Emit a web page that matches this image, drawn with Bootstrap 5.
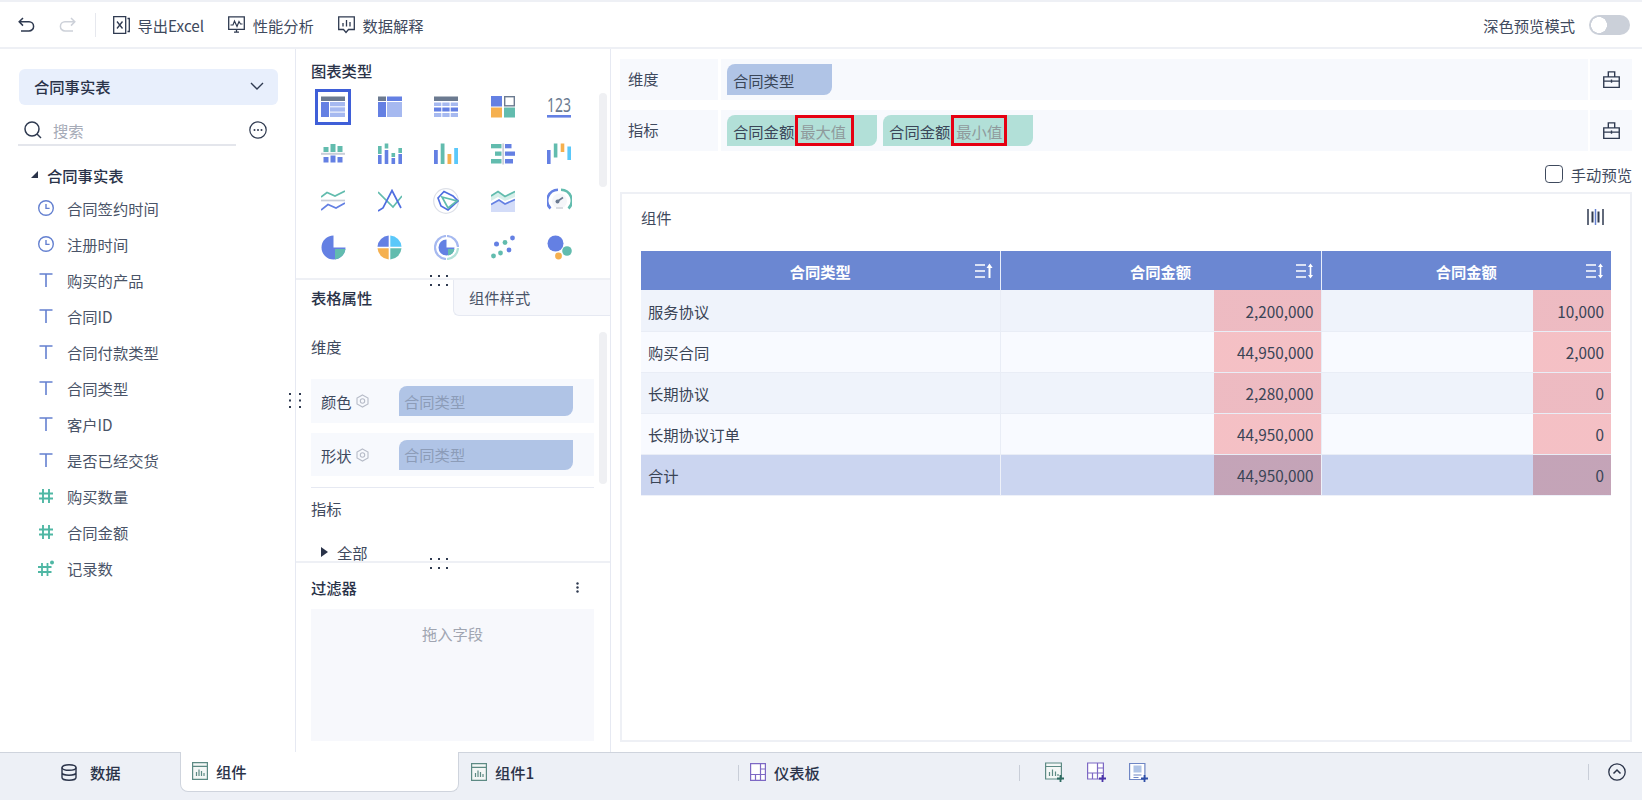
<!DOCTYPE html>
<html lang="zh-CN">
<head>
  <meta charset="UTF-8">
  <title>组件</title>
  <link href="https://cdn.jsdelivr.net/npm/bootstrap@5.3.3/dist/css/bootstrap.min.css" rel="stylesheet">
  <style>
    html, body { height: 100%; }
    body { font-family: "Noto Sans CJK SC", "Noto Sans", sans-serif; font-size: 15.3px; line-height: 20px; color: #3f4a5e; background: #fff; overflow: hidden; }
    .app-shell { width: 1642px; height: 800px; border-top: 2px solid #eef0f5; }
    .tool-bar { height: 47px; border-bottom: 2px solid #eef0f5; padding-left: 18px; padding-right: 12px; }
    .tool-sep { width: 1px; height: 24px; background: #e6e8ee; margin: 0 17px 0 19px; }
    .tool-item { gap: 7.5px; margin-right: 24px; color: #3f4a5e; }
    .form-switch .mode-switch { width: 41px; height: 20px; margin: 0 0 0 14px; border: 0; background-color: #cbd0d9; float: none; border-radius: 10px; background-image: radial-gradient(circle 8px at 10px 10px, #fff 97%, transparent 100%); background-size: 100% 100%; background-position: 0 0; }
    .work-area { height: 703px; }

    .field-panel { width: 296px; border-right: 1px solid #e6e9f2; padding: 20px 16px 0 18px; }
    .table-pick { width: 259px; height: 36px; margin-left: 1px; background: #e8effc; border-radius: 6px; padding: 0 14px 2px 15px; font-weight: 500; color: #2a3349; }
    .search-line { width: 218px; height: 26px; border-bottom: 2px solid #e4e6ec; margin-top: 15px; padding-left: 6px; padding-bottom: 4px; gap: 11px; color: #a6abb7; }
    .more-dots { margin-left: 13px; margin-top: 16px; }
    .tree-head { height: 29.5px; margin-top: 14px; padding-left: 13px; gap: 9px; font-weight: 500; color: #2a3349; }
    .tree-tri { width: 0; height: 0; border-left: 7px solid transparent; border-bottom: 7px solid #2a3349; }
    .tree-row { height: 36px; padding-left: 20px; gap: 13px; color: #4a5468; }

    .config-panel { width: 315px; border-right: 1px solid #e6e9f2; position: relative; }
    .type-pane { height: 231px; padding: 11px 0 0 9px; border-bottom: 2px solid #eef0f5; position: relative; }
    .pane-title { font-weight: 500; color: #2a3349; }
    .type-pane .pane-title { padding-left: 6px; }
    .chart-grid { display: grid; grid-template-columns: repeat(5, 56.5px); grid-auto-rows: 46.7px; margin-top: 4px; }
    .chart-cell { display: flex; align-items: center; justify-content: center; }
    .chart-on { width: 36px; height: 36px; border: 3px solid #3f5fd8; display: flex; align-items: center; justify-content: center; }
    .chart-on svg { width: 24px; height: 24px; }
    .thumb-bar { position: absolute; left: 303px; width: 8px; background: #eff0f3; border-radius: 4px; }
    .grip { position: absolute; z-index: 3; }
    .attr-pane { height: 283px; overflow: hidden; border-bottom: 2px solid #eef0f5; position: relative; }
    .attr-tabs { height: 36px; }
    .attr-tab-on { width: 157px; padding: 0 0 2px 15px; font-weight: 500; color: #2a3349; }
    .attr-tab-off { flex: 1; background: #f7f8fc; border-left: 1px solid #e6e9f2; border-bottom: 1px solid #e6e9f2; border-bottom-left-radius: 6px; padding: 0 0 2px 15px; color: #4a5468; }
    .attr-body { padding: 0 15px; }
    .slot-row { width: 283px; background: #f7f9fd; padding: 0 21px 0 10px; }
    .slot-pill { margin-left: auto; width: 174px; height: 30px; background: #b0c4e6; padding: 0 0 1px 5px; color: #8c9cb8; border-top-left-radius: 8px; border-bottom-right-radius: 8px; }
    .attr-rule { width: 283px; height: 1px; background: #e6e9f2; }
    .filter-pane { padding: 14px 15px 0; }
    .drop-box { width: 283px; height: 132px; margin-top: 12px; background: #f7f8fc; padding-top: 14px; color: #a0a5b1; text-align: center; }

    .preview-panel { flex: 1; padding: 10px 10px 0 9px; }
    .shelf-row { height: 41px; background: #f7f9fd; }
    .shelf-label { width: 90px; padding-left: 8px; padding-bottom: 4px; border-right: 3px solid #fff; box-sizing: content-box; color: #3f4a5e; }
    .shelf-drop { flex: 1; padding-left: 6px; gap: 6px; }
    .shelf-tool { width: 44px; border-left: 2px solid #fff; display: flex; align-items: center; justify-content: center; }
    .field-pill { height: 31px; padding-left: 6px; color: #3a4658; border-top-left-radius: 8px; border-bottom-right-radius: 8px; white-space: nowrap; }
    .pill-dim { width: 105px; background: #b0c4e6; }
    .pill-num { background: #b2e0d8; padding-right: 23px; }
    .pill-end { padding-right: 26px; }
    .agg-box { height: 31px; border: 3px solid #e60012; margin-left: 1px; padding: 0 5px 0 2px; color: #8f9a9c; }
    .agg-tight { padding-right: 2px; }
    .manual-line { height: 20px; margin-top: 13px; gap: 8px; }
    .manual-box { width: 18px; height: 18px; border: 1.5px solid #3f4a5e; border-radius: 3px; margin: 0 !important; background-color: #fff; float: none; }
    .chart-card { height: 550px; margin-top: 8px; border: 2px solid #eef0f5; padding: 13px 19px 0; }
    .bars-tool { margin-right: 7px; }
    .data-sheet { width: 970px; margin: 24px 0 0; table-layout: fixed; border-collapse: collapse; color: #3a4456; }
    .data-sheet th { height: 39px; padding: 0 7px; vertical-align: middle; background: #6b87d2; color: #fff; font-weight: 700; border: 0; border-right: 1px solid #e8eefb; box-shadow: none; }
    .sheet-head { display: grid; grid-template-columns: 1fr auto 1fr; align-items: center; }
    .sheet-head svg { justify-self: end; }
    .data-sheet td { height: 41px; padding: 1px 7px 0; vertical-align: middle; border: 0; border-bottom: 1px solid #e9edf6; border-right: 1px solid #e9edf6; box-shadow: none; color: #3a4456; }
    .data-sheet th:last-child, .data-sheet td:last-child { border-right: 0; }
    .data-sheet tr.shade-a td { background-color: #eff3fb; }
    .data-sheet tr.shade-b td { background-color: #f8faff; }
    .data-sheet tr.shade-sum td { background-color: #cbd5f0; border-color: #eef1f9; }
    .data-sheet tr td.heat-wide, .data-sheet tr td.heat-slim { text-align: right; background-image: linear-gradient(rgba(233, 8, 12, .24), rgba(233, 8, 12, .24)); background-repeat: no-repeat; background-position: right top; }
    .data-sheet tr.shade-sum td.heat-wide, .data-sheet tr.shade-sum td.heat-slim { background-image: linear-gradient(rgba(180, 50, 53, .3), rgba(180, 50, 53, .3)); }
    .data-sheet tr td.heat-wide { background-size: 107px 100%; }
    .data-sheet tr td.heat-slim { background-size: 78px 100%; }

    .bottom-bar { height: 48px; background: #edf0f6; border-top: 1px solid #cfd4dd; font-weight: 500; color: #2a3349; }
    .bot-tab { height: 38px; gap: 8px; }
    .bot-tab-data { width: 180px; padding-left: 61px; gap: 13px; }
    .bot-tab-on { width: 279px; height: 40px; padding: 0 0 2px 11px; background: #fff; margin-top: -1px; border: 1px solid #cfd4dd; border-top: 0; border-radius: 0 0 8px 8px; }
    .bot-tab-next { width: 279px; padding-left: 12px; }
    .bot-sep { width: 1px; height: 16px; background: #c9ced8; }
    .bot-board { width: 280px; padding-left: 11px; }
    .bot-add { width: 42px; }
  </style>
</head>
<body>

<svg width="0" height="0" class="d-block position-absolute">
  <defs>
    <symbol id="ic-clock" viewBox="0 0 16 16"><circle cx="8" cy="8" r="7.300" fill="none" stroke="#6480d0" stroke-width="1.4"/><path d="M8 4v4.4h3.6" fill="none" stroke="#6480d0" stroke-width="1.4"/></symbol>
    <symbol id="ic-text" viewBox="0 0 16 16"><path d="M1.5 2h13M8 2v13" fill="none" stroke="#6480d0" stroke-width="1.6"/></symbol>
    <symbol id="ic-num" viewBox="0 0 16 16"><path d="M5 1v14M11 1v14M1 5.5h14M1 10.5h14" fill="none" stroke="#4fb7a4" stroke-width="1.9"/></symbol>
    <symbol id="ic-box" viewBox="0 0 16 16"><path d="M.7 5.5h14.6v10H.7zM5 5.5V.8h6v4.7M.7 9.5h14.6M8 8v3" fill="none" stroke="#2f3a50" stroke-width="1.3"/></symbol>
    <symbol id="ic-sort-up" viewBox="0 0 18 16"><path d="M0 2h10M0 8h10M0 14h10" stroke="#fff" stroke-width="1.6"/><path d="M14.5 15V3" stroke="#fff" stroke-width="2"/><path d="M11.5 5 14.5 0.5 17.5 5z" fill="#fff"/></symbol>
    <symbol id="ic-sort-both" viewBox="0 0 18 16"><path d="M0 2h10M0 8h10M0 14h10" stroke="#fff" stroke-width="1.6"/><path d="M14.5 3v10" stroke="#fff" stroke-width="1.6"/><path d="M12 4 14.5 0.5 17 4zM12 12 14.5 15.5 17 12z" fill="#fff"/></symbol>
    <symbol id="ic-tab-chart" viewBox="0 0 16 18"><path d="M.6.6h14.8v16.8H.6zM.6 4.4h14.8" fill="#f4f7f6" stroke="#5d8a84" stroke-width="1.2"/><path d="M4.5 14V10M7 14V7.5M9.5 14V9M12 14v-3" stroke="#5d8a84" stroke-width="1.2"/></symbol>
  </defs>
</svg>

<div class="app-shell d-flex flex-column">

  <div class="tool-bar d-flex align-items-center">
    <svg width="17" height="16" viewBox="0 0 17 16"><path d="M5 1 1.2 4.8 5 8.6M1.5 4.8H11a4.6 4.6 0 0 1 0 9.2H3" fill="none" stroke="#2f3a50" stroke-width="1.5"/></svg>
    <svg class="ms-4" width="17" height="16" viewBox="0 0 17 16"><path d="M12 1l3.8 3.8L12 8.6M15.5 4.8H6a4.6 4.6 0 0 0 0 9.2h8" fill="none" stroke="#cdd1d9" stroke-width="1.5"/></svg>
    <span class="tool-sep"></span>
    <div class="tool-item d-flex align-items-center">
      <svg width="17" height="18" viewBox="0 0 17 18"><path d="M.7.7h12v16.6H.7zM14.5 2.5h1.8v13h-1.8" fill="none" stroke="#2f3a50" stroke-width="1.3"/><path d="M4 5.5l5.5 7M9.5 5.5 4 12.5" stroke="#2f3a50" stroke-width="1.3"/></svg>
      <span>导出Excel</span>
    </div>
    <div class="tool-item d-flex align-items-center">
      <svg width="17" height="17" viewBox="0 0 17 17"><path d="M.7.9h15.6v12.5H.7zM6 16.2h5M8.5 13.4v2.8" fill="none" stroke="#2f3a50" stroke-width="1.3"/><path d="M2.5 9 5 9l1.5-4L9 10.5 11 5.500 12.500 8h2" fill="none" stroke="#2f3a50" stroke-width="1.2"/></svg>
      <span>性能分析</span>
    </div>
    <div class="tool-item d-flex align-items-center">
      <svg width="17" height="18" viewBox="0 0 17 18"><path d="M.7.9h15.600v12.600H10.500L8 16.500 5.500 13.500H.7z" fill="none" stroke="#2f3a50" stroke-width="1.3"/><path d="M5 7v3.500M8.500 4v6.500M12 6v4.500" stroke="#2f3a50" stroke-width="1.300"/></svg>
      <span>数据解释</span>
    </div>
    <div class="form-check form-switch d-flex align-items-center ms-auto p-0 m-0">
      <label class="form-check-label" for="darkMode">深色预览模式</label>
      <input class="form-check-input mode-switch" type="checkbox" id="darkMode">
    </div>
  </div>

  <div class="work-area d-flex">

    <div class="field-panel">
      <div class="table-pick d-flex align-items-center justify-content-between">
        <span>合同事实表</span>
        <svg width="14" height="8" viewBox="0 0 14 8"><path d="M1 1l6 6 6-6" fill="none" stroke="#2f3a50" stroke-width="1.4"/></svg>
      </div>
      <div class="d-flex align-items-start">
        <div class="search-line d-flex align-items-center">
          <svg width="18" height="18" viewBox="0 0 18 18"><circle cx="8" cy="8" r="7" fill="none" stroke="#2f3a50" stroke-width="1.5"/><path d="M13 13l4 4" stroke="#2f3a50" stroke-width="1.5"/></svg>
          <span>搜索</span>
        </div>
        <svg class="more-dots" width="18" height="18" viewBox="0 0 18 18"><circle cx="9" cy="9" r="8.200" fill="none" stroke="#2f3a50" stroke-width="1.200"/><circle cx="5.500" cy="9" r="1" fill="#2f3a50"/><circle cx="9" cy="9" r="1" fill="#2f3a50"/><circle cx="12.500" cy="9" r="1" fill="#2f3a50"/></svg>
      </div>
      <div class="tree-head d-flex align-items-center"><span class="tree-tri"></span><span>合同事实表</span></div>
      <ul class="list-unstyled m-0">
        <li class="tree-row d-flex align-items-center"><svg width="16" height="16"><use href="#ic-clock"/></svg>合同签约时间</li>
        <li class="tree-row d-flex align-items-center"><svg width="16" height="16"><use href="#ic-clock"/></svg>注册时间</li>
        <li class="tree-row d-flex align-items-center"><svg width="16" height="16"><use href="#ic-text"/></svg>购买的产品</li>
        <li class="tree-row d-flex align-items-center"><svg width="16" height="16"><use href="#ic-text"/></svg>合同ID</li>
        <li class="tree-row d-flex align-items-center"><svg width="16" height="16"><use href="#ic-text"/></svg>合同付款类型</li>
        <li class="tree-row d-flex align-items-center"><svg width="16" height="16"><use href="#ic-text"/></svg>合同类型</li>
        <li class="tree-row d-flex align-items-center"><svg width="16" height="16"><use href="#ic-text"/></svg>客户ID</li>
        <li class="tree-row d-flex align-items-center"><svg width="16" height="16"><use href="#ic-text"/></svg>是否已经交货</li>
        <li class="tree-row d-flex align-items-center"><svg width="16" height="16"><use href="#ic-num"/></svg>购买数量</li>
        <li class="tree-row d-flex align-items-center"><svg width="16" height="16"><use href="#ic-num"/></svg>合同金额</li>
        <li class="tree-row d-flex align-items-center"><svg width="16" height="16" viewBox="0 0 16 16"><path d="M4 3v13M9.500 3v13M0 7h13.500M0 12h13.500" fill="none" stroke="#4fb7a4" stroke-width="1.800"/><circle cx="14" cy="2.500" r="2" fill="#4fb7a4"/></svg>记录数</li>
      </ul>
    </div>

    <div class="config-panel">
      <svg class="grip" style="left:-7px;top:344px" width="12" height="15" viewBox="0 0 12 15" fill="#2f3a50"><rect x="0" y="0" width="2" height="2"/><rect x="10" y="0" width="2" height="2"/><rect x="0" y="6.500" width="2" height="2"/><rect x="10" y="6.500" width="2" height="2"/><rect x="0" y="13" width="2" height="2"/><rect x="10" y="13" width="2" height="2"/></svg>
      <svg class="grip" style="left:134px;top:226px" width="18" height="11" viewBox="0 0 18 11" fill="#2f3a50"><rect x="0" y="0" width="2" height="2"/><rect x="8" y="0" width="2" height="2"/><rect x="16" y="0" width="2" height="2"/><rect x="0" y="9" width="2" height="2"/><rect x="8" y="9" width="2" height="2"/><rect x="16" y="9" width="2" height="2"/></svg>
      <svg class="grip" style="left:134px;top:509px" width="18" height="11" viewBox="0 0 18 11" fill="#2f3a50"><rect x="0" y="0" width="2" height="2"/><rect x="8" y="0" width="2" height="2"/><rect x="16" y="0" width="2" height="2"/><rect x="0" y="9" width="2" height="2"/><rect x="8" y="9" width="2" height="2"/><rect x="16" y="9" width="2" height="2"/></svg>

      <div class="type-pane">
        <div class="pane-title">图表类型</div>
        <span class="thumb-bar" style="top:44px;height:94px"></span>
        <div class="chart-grid">
          <div class="chart-cell"><div class="chart-on"><svg viewBox="0 0 24 24"><rect y="1.500" width="24" height="4.500" fill="#6b7a90"/><rect y="7" width="8" height="15" fill="#6480e3"/><rect x="9" y="7" width="15" height="4.300" fill="#a6b9f0"/><rect x="9" y="12.300" width="15" height="4.300" fill="#a6b9f0"/><rect x="9" y="17.600" width="15" height="4.400" fill="#a6b9f0"/></svg></div></div>
          <div class="chart-cell"><svg width="24" height="24" viewBox="0 0 24 24"><rect y="1.500" width="8" height="4.500" fill="#6b7a90"/><rect x="9" y="1.500" width="15" height="4.500" fill="#6480e3"/><rect y="7" width="8" height="15" fill="#6480e3"/><rect x="9" y="7" width="15" height="15" fill="#a6b9f0"/></svg></div>
          <div class="chart-cell"><svg width="24" height="24" viewBox="0 0 24 24"><rect y="1.500" width="24" height="4.500" fill="#6b7a90"/><g fill="#a6b9f0"><rect y="7.500" width="7.300" height="3.500"/><rect x="8.300" y="7.500" width="7.300" height="3.500"/><rect x="16.700" y="7.500" width="7.300" height="3.500"/><rect y="18" width="7.300" height="4"/><rect x="8.300" y="18" width="7.300" height="4"/><rect x="16.700" y="18" width="7.300" height="4"/></g><g fill="#6480e3"><rect y="12.500" width="7.300" height="4"/><rect x="8.300" y="12.500" width="7.300" height="4"/><rect x="16.700" y="12.500" width="7.300" height="4"/></g></svg></div>
          <div class="chart-cell"><svg width="24" height="24" viewBox="0 0 24 24"><rect y="1" width="11" height="10.500" fill="#6480e3"/><rect x="13.700" y="1.700" width="9.600" height="9.100" fill="#fff" stroke="#6b7a90" stroke-width="1.400"/><rect y="12.500" width="11" height="10" fill="#f5b04f"/><rect x="13" y="12.500" width="11" height="10" fill="#62bcae"/></svg></div>
          <div class="chart-cell"><svg width="24" height="24" viewBox="0 0 24 24" overflow="visible"><text x="0" y="17" textLength="24" lengthAdjust="spacingAndGlyphs" font-family="Noto Sans, sans-serif" font-size="20" fill="#6b7a90">123</text><rect y="20" width="24" height="2.600" fill="#6480e3"/></svg></div>

          <div class="chart-cell"><svg width="24" height="24" viewBox="0 0 24 24"><g fill="#62bcae"><rect x="2.500" y="5" width="5" height="5"/><rect x="9.500" y="2" width="5" height="8"/><rect x="16.500" y="4" width="5" height="6"/></g><rect y="10.800" width="24" height="2" fill="#c9ced8"/><g fill="#6480e3"><rect x="2.500" y="15" width="5" height="5.500"/><rect x="9.500" y="13.500" width="5" height="7"/><rect x="16.500" y="15" width="5" height="5.500"/></g></svg></div>
          <div class="chart-cell"><svg width="24" height="24" viewBox="0 0 24 24"><g fill="#62bcae"><rect y="4" width="3.600" height="8"/><rect x="6.700" y="1.500" width="3.600" height="5"/><rect x="13.500" y="11" width="3.600" height="4"/><rect x="20.400" y="6" width="3.600" height="5"/></g><g fill="#6480e3"><rect y="13" width="3.600" height="9"/><rect x="6.700" y="8" width="3.600" height="14"/><rect x="13.500" y="16" width="3.600" height="6"/><rect x="20.400" y="12" width="3.600" height="10"/></g></svg></div>
          <div class="chart-cell"><svg width="24" height="24" viewBox="0 0 24 24"><rect y="8" width="3.800" height="14" fill="#6480e3"/><rect x="6.700" y="1.500" width="3.800" height="20.500" fill="#62bcae"/><rect x="13.500" y="12" width="3.800" height="10" fill="#f5b04f"/><rect x="20.200" y="6" width="3.800" height="16" fill="#5ac8fa"/></svg></div>
          <div class="chart-cell"><svg width="24" height="24" viewBox="0 0 24 24"><rect x="11.300" y="1.500" width="1.800" height="21" fill="#c9ced8"/><g fill="#62bcae"><rect y="2" width="10.500" height="4.300"/><rect x="4" y="9.500" width="6.500" height="4.300"/><rect y="17" width="10.500" height="4.500"/></g><g fill="#6480e3"><rect x="14" y="2" width="6.500" height="4.300"/><rect x="14" y="9.500" width="10" height="4.300"/><rect x="14" y="17" width="8" height="4.500"/></g></svg></div>
          <div class="chart-cell"><svg width="24" height="24" viewBox="0 0 24 24"><rect y="8" width="3.600" height="14" fill="#6480e3"/><rect x="6.800" y="1.500" width="3.600" height="14" fill="#62bcae"/><rect x="13.700" y="1.500" width="3.600" height="8.500" fill="#f5b04f"/><rect x="20.400" y="4.500" width="3.600" height="13.500" fill="#5ac8fa"/></svg></div>

          <div class="chart-cell"><svg width="24" height="24" viewBox="0 0 24 24" fill="none" stroke-width="1.700"><path d="M0 8 6 3.500 14 7 24 2" stroke="#62bcae"/><path d="M0 11.500h24" stroke="#c9ced8"/><path d="M0 21 7 15.500 15 19 24 14" stroke="#6480e3"/></svg></div>
          <div class="chart-cell"><svg width="24" height="24" viewBox="0 0 24 24" fill="none" stroke-width="1.700"><path d="M0 3 15 18 24 7" stroke="#62bcae"/><path d="M0 22 5 19 14 1.500 23 19" stroke="#4f6ee0"/></svg></div>
          <div class="chart-cell"><svg width="26" height="26" viewBox="0 0 26 26" fill="none"><circle cx="13" cy="13" r="12.300" stroke="#dde0e8" stroke-width="1.200"/><path d="M5 10 11 3.500 20 8 25 13 15 22 8 18z" stroke="#4f6ee0" stroke-width="1.700"/><path d="M9 9 24 13 15 20z" stroke="#62bcae" stroke-width="1.700"/></svg></div>
          <div class="chart-cell"><svg width="24" height="24" viewBox="0 0 24 24" fill="none"><path d="M0 16 8 11.500 14 15.500 24 11V23H0z" fill="#d3dcf8"/><path d="M0 6 7 2 14 7 24 2V8L14 12 7 8 0 12z" fill="#d6efea"/><path d="M0 7 7 2.500 14 7.500 24 2.500" stroke="#62bcae" stroke-width="1.600"/><path d="M0 15.500 8 11 14 15 24 10.500" stroke="#6480e3" stroke-width="1.600"/></svg></div>
          <div class="chart-cell"><svg width="25" height="25" viewBox="0 0 25 25" fill="none" stroke-width="2.600"><path d="M3.500 20.500A11 11 0 0 1 11 1.700" stroke="#6480e3"/><path d="M14 1.700A11 11 0 0 1 21.500 20.500" stroke="#62bcae"/><circle cx="12.500" cy="13" r="7.500" fill="#f5f6f9" stroke="none"/><path d="M9.500 14 16 9.500" stroke="#6b7a90" stroke-width="1.600"/><circle cx="10.500" cy="13.500" r="2" fill="#6b7a90" stroke="none"/><path d="M9 20h7" stroke="#cfd3da" stroke-width="1.500"/></svg></div>

          <div class="chart-cell"><svg width="25" height="25" viewBox="0 0 25 25"><path d="M12.500 0.500A12 12 0 1 0 24.500 12.500H12.500z" fill="#6480e3"/><path d="M14 14H24.500A12 12 0 0 1 14 24.500z" fill="#62bcae"/></svg></div>
          <div class="chart-cell"><svg width="25" height="25" viewBox="0 0 25 25"><path d="M11.700 0.500A12 12 0 0 0 0.500 11.700H11.700z" fill="#6480e3"/><path d="M13.300 0.500A12 12 0 0 1 24.500 11.700H13.300z" fill="#5ac8fa"/><path d="M0.500 13.300H11.700V24.500A12 12 0 0 1 0.500 13.300z" fill="#f5b04f"/><path d="M13.300 13.300H24.500A12 12 0 0 1 13.300 24.500z" fill="#62bcae"/></svg></div>
          <div class="chart-cell"><svg width="25" height="25" viewBox="0 0 25 25" fill="none"><path d="M12 1A11.500 11.500 0 0 0 1 12 11.500 11.500 0 0 0 12 24" stroke="#a6b9f0" stroke-width="2.200"/><path d="M13 1A11.500 11.500 0 0 1 24 12" stroke="#a6b9f0" stroke-width="2.200"/><path d="M24 13A11.500 11.500 0 0 1 13 24" stroke="#b4e2da" stroke-width="2.200"/><path d="M12.500 4.500A8 8 0 1 0 20.500 12.500H12.500z" fill="#6480e3"/><path d="M14 14H20.500A8 8 0 0 1 14 20.500z" fill="#62bcae"/></svg></div>
          <div class="chart-cell"><svg width="24" height="24" viewBox="0 0 24 24"><g fill="#6480e3"><circle cx="5.500" cy="9" r="2.500"/><circle cx="21.500" cy="3" r="2.400"/><circle cx="18" cy="15" r="2.400"/></g><g fill="#62bcae"><circle cx="14" cy="7.500" r="2.400"/><circle cx="2.500" cy="21" r="2.400"/><circle cx="9.500" cy="18" r="2.400"/></g></svg></div>
          <div class="chart-cell"><svg width="25" height="25" viewBox="0 0 25 25"><circle cx="8.500" cy="8.500" r="8" fill="#6480e3"/><circle cx="20" cy="16" r="4.800" fill="#62bcae"/><circle cx="11.500" cy="21" r="3.400" fill="#f5b04f"/></svg></div>
        </div>
      </div>

      <div class="attr-pane">
        <span class="thumb-bar" style="top:52px;height:152px"></span>
        <div class="attr-tabs d-flex">
          <div class="attr-tab-on d-flex align-items-center">表格属性</div>
          <div class="attr-tab-off d-flex align-items-center">组件样式</div>
        </div>
        <div class="attr-body">
          <div style="margin-top:20px">维度</div>
          <div class="slot-row d-flex align-items-center" style="margin-top:23px;height:44px">
            <span>颜色</span>
            <svg class="ms-1" width="13" height="14" viewBox="0 0 13 14" fill="none" stroke="#b7bcc8" stroke-width="1.100"><path d="M6.500 1 12 4v6l-5.500 3L1 10V4z"/><circle cx="6.500" cy="7" r="2.200"/></svg>
            <div class="slot-pill d-flex align-items-center">合同类型</div>
          </div>
          <div class="slot-row d-flex align-items-center" style="margin-top:10px;height:43px">
            <span>形状</span>
            <svg class="ms-1" width="13" height="14" viewBox="0 0 13 14" fill="none" stroke="#b7bcc8" stroke-width="1.100"><path d="M6.500 1 12 4v6l-5.500 3L1 10V4z"/><circle cx="6.500" cy="7" r="2.200"/></svg>
            <div class="slot-pill d-flex align-items-center">合同类型</div>
          </div>
          <div class="attr-rule" style="margin-top:11px"></div>
          <div style="margin-top:10px">指标</div>
          <div class="d-flex align-items-center" style="margin-top:24px;padding-left:10px;gap:9px">
            <svg width="7" height="10" viewBox="0 0 7 10"><path d="M0 0l7 5-7 5z" fill="#2a3349"/></svg>
            <span>全部</span>
          </div>
        </div>
      </div>

      <div class="filter-pane">
        <div class="d-flex align-items-center justify-content-between">
          <span class="pane-title">过滤器</span>
          <svg class="me-3" width="3" height="11" viewBox="0 0 3 11" fill="#2f3a50"><circle cx="1.500" cy="1.500" r="1.200"/><circle cx="1.500" cy="5.500" r="1.200"/><circle cx="1.500" cy="9.500" r="1.200"/></svg>
        </div>
        <div class="drop-box">拖入字段</div>
      </div>
    </div>

    <div class="preview-panel">
      <div class="shelf-row d-flex">
        <div class="shelf-label d-flex align-items-center">维度</div>
        <div class="shelf-drop d-flex align-items-center">
          <div class="field-pill pill-dim d-flex align-items-center">合同类型</div>
        </div>
        <div class="shelf-tool"><svg width="17" height="17"><use href="#ic-box"/></svg></div>
      </div>
      <div class="shelf-row d-flex" style="margin-top:10px">
        <div class="shelf-label d-flex align-items-center">指标</div>
        <div class="shelf-drop d-flex align-items-center">
          <div class="field-pill pill-num d-flex align-items-center"><span>合同金额</span><span class="agg-box d-flex align-items-center">最大值</span></div>
          <div class="field-pill pill-num pill-end d-flex align-items-center"><span>合同金额</span><span class="agg-box agg-tight d-flex align-items-center">最小值</span></div>
        </div>
        <div class="shelf-tool"><svg width="17" height="17"><use href="#ic-box"/></svg></div>
      </div>

      <div class="manual-line d-flex align-items-center justify-content-end">
        <input class="form-check-input manual-box" type="checkbox" id="manualPreview">
        <label for="manualPreview">手动预览</label>
      </div>

      <div class="chart-card">
        <div class="d-flex align-items-center justify-content-between">
          <span>组件</span>
          <svg class="bars-tool" width="17" height="16" viewBox="0 0 17 16"><path d="M1 0v16M16 0v16" stroke="#2f3a50" stroke-width="1.500"/><path d="M5.500 2.500v11M11.500 2.500v11" stroke="#2f3a50" stroke-width="2"/><path d="M8.500 0v16" stroke="#6480d0" stroke-width="1.500"/></svg>
        </div>
        <table class="table data-sheet">
          <colgroup><col style="width:359px"><col style="width:321px"><col style="width:290px"></colgroup>
          <thead>
            <tr>
              <th><div class="sheet-head"><span></span><span>合同类型</span><svg width="18" height="16"><use href="#ic-sort-up"/></svg></div></th>
              <th><div class="sheet-head"><span></span><span>合同金额</span><svg width="18" height="16"><use href="#ic-sort-both"/></svg></div></th>
              <th><div class="sheet-head"><span></span><span>合同金额</span><svg width="18" height="16"><use href="#ic-sort-both"/></svg></div></th>
            </tr>
          </thead>
          <tbody>
            <tr class="shade-a"><td>服务协议</td><td class="heat-wide">2,200,000</td><td class="heat-slim">10,000</td></tr>
            <tr class="shade-b"><td>购买合同</td><td class="heat-wide">44,950,000</td><td class="heat-slim">2,000</td></tr>
            <tr class="shade-a"><td>长期协议</td><td class="heat-wide">2,280,000</td><td class="heat-slim">0</td></tr>
            <tr class="shade-b"><td>长期协议订单</td><td class="heat-wide">44,950,000</td><td class="heat-slim">0</td></tr>
            <tr class="shade-sum"><td>合计</td><td class="heat-wide">44,950,000</td><td class="heat-slim">0</td></tr>
          </tbody>
        </table>
      </div>
    </div>
  </div>

  <div class="bottom-bar d-flex align-items-start">
    <div class="bot-tab bot-tab-data d-flex align-items-center">
      <svg width="16" height="17" viewBox="0 0 16 17" fill="none" stroke="#2a3349" stroke-width="1.400"><ellipse cx="8" cy="3.500" rx="7" ry="2.800"/><path d="M1 3.500v10c0 1.500 3 2.800 7 2.800s7-1.300 7-2.800v-10M1 8.500c0 1.500 3 2.800 7 2.800s7-1.300 7-2.800"/></svg>
      <span>数据</span>
    </div>
    <div class="bot-tab bot-tab-on d-flex align-items-center">
      <svg width="16" height="18"><use href="#ic-tab-chart"/></svg>
      <span>组件</span>
    </div>
    <div class="bot-tab bot-tab-next d-flex align-items-center">
      <svg width="16" height="18"><use href="#ic-tab-chart"/></svg>
      <span>组件1</span>
    </div>
    <span class="bot-sep" style="margin-top:12px"></span>
    <div class="bot-tab bot-board d-flex align-items-center">
      <svg width="16" height="18" viewBox="0 0 16 18" fill="#fff" stroke="#7d68c4" stroke-width="1.200"><path d="M.6.6h14.800v16.800H.6zM10.500.6v11M.6 11.500h14.800M10.500 6h5M5.500 11.500v6M10.500 11.500v6"/></svg>
      <span>仪表板</span>
    </div>
    <span class="bot-sep" style="margin-top:12px"></span>
    <div class="bot-tab d-flex align-items-center" style="padding-left:25px;gap:0">
      <svg class="bot-add" width="20" height="20" viewBox="0 0 42 20" preserveAspectRatio="xMinYMid meet"><path d="M.6 1h15.800v16H.6zM.6 4.500h15.800" fill="#f4f7f6" stroke="#5d8a84" stroke-width="1.200"/><path d="M4.500 14v-4M7.500 14V7.500M10.500 14V9.500M13 14v-2" stroke="#5d8a84" stroke-width="1.200"/><path d="M15.500 13v7M12 16.500h7" stroke="#2f6b62" stroke-width="1.800"/></svg>
      <svg class="bot-add" width="20" height="20" viewBox="0 0 42 20" preserveAspectRatio="xMinYMid meet"><path d="M.6 1h15.800v16H.6zM10.500 1v10M.6 11h15.800M10.500 6h5.900M5.500 11v6M10.500 11v6" fill="#fff" stroke="#7d68c4" stroke-width="1.200"/><path d="M15.500 13v7M12 16.500h7" stroke="#4a34a8" stroke-width="1.800"/></svg>
      <svg class="bot-add" width="20" height="20" viewBox="0 0 42 20" preserveAspectRatio="xMinYMid meet"><path d="M.6 1.500h15.300v16H.6z" fill="#fff" stroke="#6f86c4" stroke-width="1.200"/><rect x="4.500" y="3.500" width="8" height="7" fill="#b0c4e6"/><path d="M4.500 13h8M4.500 15.500h5" stroke="#6f86c4" stroke-width="1.200"/><path d="M15.500 13v7M12 16.500h7" stroke="#2f4fa8" stroke-width="1.800"/></svg>
    </div>
    <div class="ms-auto d-flex align-items-center" style="height:38px;gap:19px;padding-right:16px">
      <span class="bot-sep"></span>
      <svg width="18" height="18" viewBox="0 0 18 18" fill="none" stroke="#2a3349" stroke-width="1.300"><circle cx="9" cy="9" r="8.200"/><path d="M5.500 10.500 9 7l3.500 3.500" stroke-width="1.500"/></svg>
    </div>
  </div>
</div>

<script src="https://cdn.jsdelivr.net/npm/bootstrap@5.3.3/dist/js/bootstrap.bundle.min.js"></script>
</body>
</html>
